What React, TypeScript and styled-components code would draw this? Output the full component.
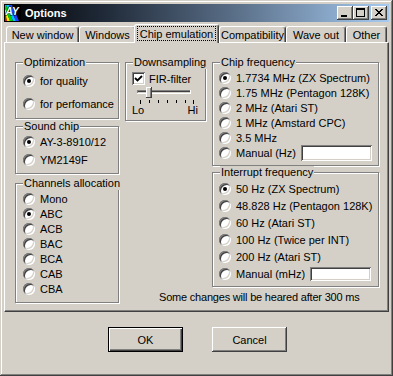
import React from 'react';
import styled, {createGlobalStyle} from 'styled-components';

const GlobalStyle = createGlobalStyle`
  html, body {
    margin: 0;
    padding: 0;
    background: #d4d0c8;
  }
  body {
    font-family: 'Liberation Sans', Arial, sans-serif;
    font-size: 11px;
    color: #000;
  }
  * {
    box-sizing: border-box;
  }
`

const raised = 'inset -1px -1px #404040, inset 1px 1px #fff, inset -2px -2px #808080, inset 2px 2px #d4d0c8'
const sunken = 'inset 1px 1px #808080, inset -1px -1px #fff, inset 2px 2px #404040, inset -2px -2px #d4d0c8'

type Option = { label: string, on?: boolean }

const optimization: Option[] = [{label: 'for quality', on: true}, {label: 'for perfomance'}]
const soundChip: Option[] = [{label: 'AY-3-8910/12', on: true}, {label: 'YM2149F'}]
const channels: Option[] = ['Mono', 'ABC', 'ACB', 'BAC', 'BCA', 'CAB', 'CBA'].map(l => ({label: l, on: l === 'ABC'}))
const chipFreq: Option[] = [
    {label: '1.7734 MHz (ZX Spectrum)', on: true},
    {label: '1.75 MHz (Pentagon 128K)'},
    {label: '2 MHz (Atari ST)'},
    {label: '1 MHz (Amstard CPC)'},
    {label: '3.5 MHz'},
]
const intFreq: Option[] = [
    {label: '50 Hz (ZX Spectrum)', on: true},
    {label: '48.828 Hz (Pentagon 128K)'},
    {label: '60 Hz (Atari ST)'},
    {label: '100 Hz (Twice per INT)'},
    {label: '200 Hz (Atari ST)'},
]

const tabs = [
    {label: 'New window', w: 73},
    {label: 'Windows', w: 57},
    {label: 'Chip emulation', w: 85, active: true},
    {label: 'Compatibility', w: 67},
    {label: 'Wave out', w: 60},
    {label: 'Other', w: 41},
]

const AppIcon = () => (
    <svg width="16" height="16" viewBox="0 0 16 16">
        <rect width="16" height="16" fill="#000"/>
        <polygon points="0,6 0,16 2,16" fill="#ff0000"/>
        <polygon points="0,6 2,16 5,16 0,3" fill="#ffee00"/>
        <polygon points="0,3 5,16 8,16 1,0 0,0" fill="#00d000"/>
        <polygon points="1,0 8,16 11,16 4,0" fill="#00c0ff"/>
        <polygon points="4,0 11,16 14,16 7,0" fill="#2040ff"/>
        <text x="0.5" y="10" fontFamily="Liberation Sans, Arial, sans-serif" fontSize="10" fontWeight="bold"
              fontStyle="italic" fill="#fff" stroke="#000" strokeWidth="0.8" paintOrder="stroke">AY</text>
    </svg>
)

export default function App() {
    return (
        <>
            <GlobalStyle/>
            <Window>
                <TitleBar>
                    <AppIcon/>
                    <TitleText>Options</TitleText>
                    <CaptionButton>
                        <svg width="16" height="14"><rect x="4" y="9" width="6" height="2" fill="#000"/></svg>
                    </CaptionButton>
                    <CaptionButton>
                        <svg width="16" height="14">
                            <rect x="3.5" y="2.5" width="8" height="8" fill="none" stroke="#000"/>
                            <rect x="3" y="3" width="9" height="1" fill="#000"/>
                        </svg>
                    </CaptionButton>
                    <CaptionButton $gap={2}>
                        <svg width="16" height="14">
                            <path d="M4 3 L11 10 M5 3 L12 10 M11 3 L4 10 M12 3 L5 10" stroke="#000" strokeWidth="1"
                                  shapeRendering="crispEdges"/>
                        </svg>
                    </CaptionButton>
                </TitleBar>

                <TabStrip>
                    {tabs.map(t => (
                        <Tab key={t.label} $w={t.w} $active={t.active}>
                            {t.active ? <FocusBox>{t.label}</FocusBox> : t.label}
                        </Tab>
                    ))}
                </TabStrip>

                <Panel>
                    <Column $w={104}>
                        <GroupBox $h={57} $pt={6}>
                            <Caption>Optimization</Caption>
                            {optimization.map(o => <RadioRow key={o.label} $h={23} option={o}/>)}
                        </GroupBox>
                        <GroupBox $h={48} $pt={6} $mt={7}>
                            <Caption>Sound chip</Caption>
                            {soundChip.map(o => <RadioRow key={o.label} $h={18} option={o}/>)}
                        </GroupBox>
                        <GroupBox $h={120} $pt={7} $mt={9}>
                            <Caption>Channels allocation</Caption>
                            {channels.map(o => <RadioRow key={o.label} $h={15} option={o}/>)}
                        </GroupBox>
                    </Column>

                    <Column $w={254}>
                        <TopRow>
                            <GroupBox $w={81} $h={59} $pt={9} $pl={6}>
                                <Caption>Downsampling</Caption>
                                <Row $h={13} $gap={4}>
                                    <CheckBox>
                                        <svg width="9" height="9">
                                            <polyline points="1,4 3.5,6.5 8,2" fill="none" stroke="#000" strokeWidth="1.8"/>
                                        </svg>
                                    </CheckBox>
                                    FIR-filter
                                </Row>
                                <SliderArt width="64" height="18" viewBox="0 0 64 18">
                                    <rect x="4" y="4" width="54" height="1" fill="#808080"/>
                                    <rect x="4" y="4" width="1" height="4" fill="#808080"/>
                                    <rect x="5" y="5" width="52" height="1" fill="#404040"/>
                                    <rect x="4" y="7" width="54" height="1" fill="#fff"/>
                                    <rect x="57" y="4" width="1" height="4" fill="#fff"/>
                                    <rect x="13" y="1" width="6" height="11" fill="#d4d0c8"/>
                                    <rect x="13" y="1" width="6" height="1" fill="#fff"/>
                                    <rect x="13" y="1" width="1" height="11" fill="#fff"/>
                                    <rect x="18" y="1" width="1" height="11" fill="#404040"/>
                                    <rect x="17" y="2" width="1" height="9" fill="#808080"/>
                                    <rect x="13" y="11" width="6" height="1" fill="#404040"/>
                                    {[7, 16, 25, 34, 43, 52, 60].map((x, i) => (
                                        <rect key={x} x={x} y="14" width="1" height={i === 0 || i === 6 ? 4 : 3}
                                              fill="#000"/>
                                    ))}
                                </SliderArt>
                                <ScaleRow>
                                    <span>Lo</span>
                                    <span>Hi</span>
                                </ScaleRow>
                            </GroupBox>

                            <Column $w={167}>
                                <GroupBox $h={104} $pt={7} $pl={6}>
                                    <Caption>Chip frequency</Caption>
                                    {chipFreq.map(o => <RadioRow key={o.label} $h={15} option={o}/>)}
                                    <Row $h={15}>
                                        <Radio/>
                                        Manual (Hz)
                                        <Field $w={71} $h={16} readOnly/>
                                    </Row>
                                </GroupBox>
                                <GroupBox $h={115} $pt={7} $pl={6} $mt={6}>
                                    <Caption>Interrupt frequency</Caption>
                                    {intFreq.map(o => <RadioRow key={o.label} $h={17} option={o}/>)}
                                    <Row $h={17}>
                                        <Radio/>
                                        Manual (mHz)
                                        <Field $w={61} $h={14} readOnly/>
                                    </Row>
                                </GroupBox>
                            </Column>
                        </TopRow>
                        <Note>Some changes will be heared after 300 ms</Note>
                    </Column>
                </Panel>

                <ButtonRow>
                    <Button $default>OK</Button>
                    <Button>Cancel</Button>
                </ButtonRow>
            </Window>
        </>
    );
}

const RadioRow = ({option, $h}: { option: Option, $h: number }) => (
    <Row $h={$h}>
        <Radio $on={option.on}/>
        {option.label}
    </Row>
)

const Window = styled.div`
  width: 393px;
  height: 376px;
  padding: 4px;
  background: #d4d0c8;
  box-shadow: inset -1px -1px #404040, inset 1px 1px #d4d0c8, inset -2px -2px #808080, inset 2px 2px #fff;
  display: flex;
  flex-direction: column;
`
const TitleBar = styled.div`
  height: 18px;
  display: flex;
  align-items: center;
  padding: 0 2px 0 1px;
  background: linear-gradient(to right, #000 0%, #1e2836 25%, #5a6f88 60%, #a6caf0 100%);

  svg {
    display: block;
  }
`
const TitleText = styled.span`
  flex: 1;
  margin-left: 4px;
  color: #fff;
  font-weight: bold;
  font-size: 11px;
`
const CaptionButton = styled.div<{ $gap?: number }>`
  width: 16px;
  height: 14px;
  margin-left: ${props => props.$gap ?? 0}px;
  background: #d4d0c8;
  box-shadow: ${raised};
`
const TabStrip = styled.div`
  position: relative;
  z-index: 1;
  display: flex;
  align-items: flex-end;
  height: 18px;
  margin-top: 2px;
  padding-left: 2px;
`
const Tab = styled.div<{ $w: number, $active?: boolean }>`
  position: relative;
  z-index: ${props => props.$active ? 2 : 1};
  width: ${props => props.$w}px;
  height: ${props => props.$active ? 19 : 16}px;
  margin-left: ${props => props.$active ? -2 : 0}px;
  margin-bottom: ${props => props.$active ? -1 : 0}px;
  padding: ${props => props.$active ? '1px 2px 0' : '0'};
  border: 1px solid #fff;
  border-bottom: 0;
  border-right-color: #404040;
  border-radius: 3px 3px 0 0;
  box-shadow: inset -1px 0 #808080;
  background: #d4d0c8;
  display: flex;
  align-items: ${props => props.$active ? 'flex-start' : 'center'};
  justify-content: center;
  white-space: nowrap;
`
const FocusBox = styled.span`
  width: 100%;
  height: 15px;
  display: flex;
  align-items: center;
  justify-content: center;
  outline: 1px dotted #000;
  outline-offset: -1px;
`
const Panel = styled.div`
  height: 270px;
  padding: 19px 0 0 10px;
  border: 1px solid #fff;
  border-right-color: #404040;
  border-bottom-color: #404040;
  box-shadow: inset -1px -1px #808080;
  display: flex;
  align-items: flex-start;
  gap: 6px;
`
const Column = styled.div<{ $w: number }>`
  width: ${props => props.$w}px;
  display: flex;
  flex-direction: column;
`
const TopRow = styled.div`
  display: flex;
  align-items: flex-start;
  gap: 6px;
`
const GroupBox = styled.div<{ $h: number, $pt: number, $pl?: number, $mt?: number, $w?: number }>`
  position: relative;
  ${props => props.$w ? `width: ${props.$w}px;` : ''}
  height: ${props => props.$h}px;
  margin-top: ${props => props.$mt ?? 0}px;
  padding: ${props => props.$pt}px 0 0 ${props => props.$pl ?? 7}px;
  border: 1px solid #808080;
  box-shadow: inset 1px 1px #fff, 1px 1px #fff;
  display: flex;
  flex-direction: column;
`
const Caption = styled.span`
  position: absolute;
  top: -7px;
  left: 7px;
  padding: 0 1px;
  line-height: 13px;
  background: #d4d0c8;
  white-space: nowrap;
`
const Row = styled.div<{ $h: number, $gap?: number }>`
  height: ${props => props.$h}px;
  display: flex;
  align-items: center;
  gap: ${props => props.$gap ?? 5}px;
  white-space: nowrap;
`
const Radio = styled.span<{ $on?: boolean }>`
  position: relative;
  flex: none;
  width: 12px;
  height: 12px;
  border-radius: 50%;
  background: #fff;
  box-shadow: ${sunken};

  &::after {
    content: '';
    display: ${props => props.$on ? 'block' : 'none'};
    position: absolute;
    left: 4px;
    top: 4px;
    width: 4px;
    height: 4px;
    border-radius: 50%;
    background: #000;
  }
`
const CheckBox = styled.span`
  flex: none;
  width: 13px;
  height: 13px;
  background: #fff;
  box-shadow: ${sunken};
  display: flex;
  align-items: center;
  justify-content: center;

  svg {
    display: block;
  }
`
const SliderArt = styled.svg`
  display: block;
  margin: 1px 0 0 1px;
`
const ScaleRow = styled.div`
  display: flex;
  justify-content: space-between;
  margin-right: 7px;
  line-height: 13px;
`
const Field = styled.input<{ $w: number, $h: number }>`
  width: ${props => props.$w}px;
  height: ${props => props.$h}px;
  margin: 0 10px 0 auto;
  padding: 0;
  border: 0;
  background: #fff;
  box-shadow: ${sunken};
  outline: none;
`
const Note = styled.div`
  margin-top: 4px;
  padding-left: 34px;
  line-height: 13px;
  letter-spacing: -0.2px;
  white-space: nowrap;
`
const ButtonRow = styled.div`
  display: flex;
  gap: 29px;
  margin-top: 15px;
  padding-left: 104px;
`
const Button = styled.button<{ $default?: boolean }>`
  width: 75px;
  height: 25px;
  padding: 0;
  font: inherit;
  color: #000;
  background: #d4d0c8;
  border: ${props => props.$default ? '1px solid #000' : '0'};
  box-shadow: ${props => props.$default
          ? 'inset 1px 1px #fff, inset -1px -1px #404040, inset -2px -2px #808080'
          : raised};
`
